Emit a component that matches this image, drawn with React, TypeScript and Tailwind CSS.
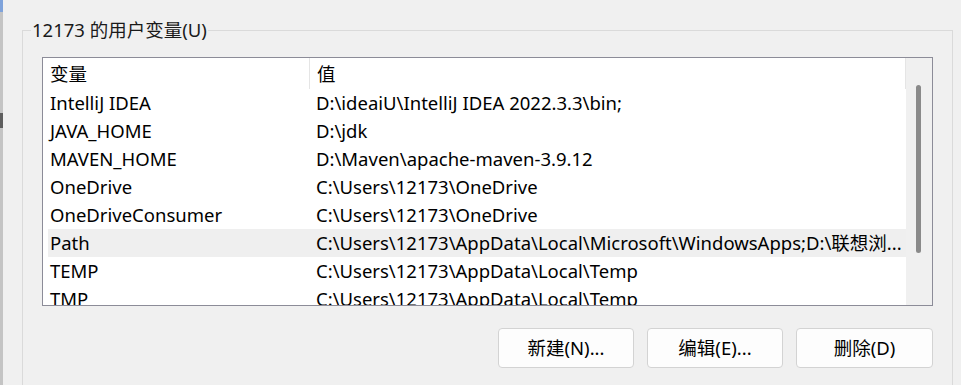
const rows: { name: string; value: string; selected?: boolean }[] = [
  { name: "IntelliJ IDEA", value: "D:\\ideaiU\\IntelliJ IDEA 2022.3.3\\bin;" },
  { name: "JAVA_HOME", value: "D:\\jdk" },
  { name: "MAVEN_HOME", value: "D:\\Maven\\apache-maven-3.9.12" },
  { name: "OneDrive", value: "C:\\Users\\12173\\OneDrive" },
  { name: "OneDriveConsumer", value: "C:\\Users\\12173\\OneDrive" },
  {
    name: "Path",
    value: "C:\\Users\\12173\\AppData\\Local\\Microsoft\\WindowsApps;D:\\联想浏...",
    selected: true,
  },
  { name: "TEMP", value: "C:\\Users\\12173\\AppData\\Local\\Temp" },
  { name: "TMP", value: "C:\\Users\\12173\\AppData\\Local\\Temp" },
];

export default function App() {
  return (
    <div className="w-[961px] h-[385px] overflow-hidden bg-[#f0f0f0] flex font-['Noto_Sans','Noto_Sans_CJK_SC',sans-serif] text-[18.5px] text-black">
      {/* edge of the window behind */}
      <div className="w-[3px] shrink-0 flex flex-col">
        <div className="h-[12px] bg-[#7fa3db]" />
        <div className="h-[101px] bg-[#c4c4c4]" />
        <div className="h-[15px] bg-[#5e5e5e]" />
        <div className="flex-1 bg-[#c4c4c4]" />
      </div>

      <fieldset className="ml-[19px] mt-[18px] w-[931px] h-[420px] shrink-0 border-t border-l border-r border-[#dadada]">
        <legend className="ml-[8px] px-[1px] leading-[24px] text-[#1a1a1a]">
          12173 的用户变量(U)
        </legend>

        <div className="ml-[19px] mt-[15px] w-[891px] h-[249px] border border-[#8c8c98] bg-white flex overflow-hidden">
          <div className="flex-1 flex flex-col min-w-0">
            <div className="h-[31px] flex shrink-0">
              <div className="w-[267px] pl-[7px] flex items-center border-r border-[#e5e5e5]">变量</div>
              <div className="flex-1 pl-[7px] flex items-center border-r border-[#e5e5e5]">值</div>
            </div>
            {rows.map((r) => (
              <div
                key={r.name}
                className={`ml-[5px] h-[28px] shrink-0 flex items-center ${r.selected ? "bg-[#efefef]" : ""}`}
              >
                <div className="w-[262px] pl-[2px] whitespace-nowrap">{r.name}</div>
                <div className="flex-1 min-w-0 pl-[6px] whitespace-nowrap overflow-hidden text-ellipsis">
                  {r.value}
                </div>
              </div>
            ))}
          </div>
          <div className="w-[26px] shrink-0 bg-[#f0f0f0]">
            <div className="ml-[10px] mt-[27px] w-[5px] h-[168px] rounded-full bg-[#8a8a8a]" />
          </div>
        </div>

        <div className="ml-[19px] mt-[22px] w-[891px] flex justify-end gap-[13px]">
          <button className="w-[136px] h-[40px] rounded-[4px] border border-[#d3d3d3] bg-[#fdfdfd]">新建(N)...</button>
          <button className="w-[136px] h-[40px] rounded-[4px] border border-[#d3d3d3] bg-[#fdfdfd]">编辑(E)...</button>
          <button className="w-[137px] h-[40px] rounded-[4px] border border-[#d3d3d3] bg-[#fdfdfd]">删除(D)</button>
        </div>
      </fieldset>
    </div>
  );
}
